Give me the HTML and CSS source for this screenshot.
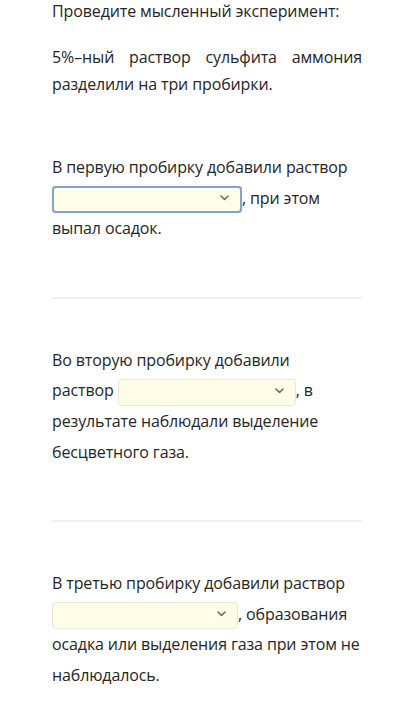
FILE: index.html
```html
<!DOCTYPE html>
<html lang="ru">
<head>
<meta charset="utf-8">
<link rel="stylesheet" href="styles.css">
</head>
<body>
<main class="page">
  <div class="intro">
    <p class="lead">Проведите мысленный эксперимент:</p>
    <p class="just">5%–ный раствор сульфита аммония разделили на три пробирки.</p>
  </div>

  <section class="task task-first">
    <p>В первую пробирку добавили раствор <span class="select focused"><span class="chev"><svg width="9" height="6" viewBox="0 0 9 6"><path d="M1 1l3.5 3.5L8 1" fill="none" stroke="#6b6b6b" stroke-width="1.6" stroke-linecap="round" stroke-linejoin="round"/></svg></span></span>, при этом выпал осадок.</p>
  </section>
  <hr class="divider">

  <section class="task">
    <p>Во вторую пробирку добавили <span class="nowrap">раствор <span class="select narrow"><span class="chev"><svg width="9" height="6" viewBox="0 0 9 6"><path d="M1 1l3.5 3.5L8 1" fill="none" stroke="#6b6b6b" stroke-width="1.6" stroke-linecap="round" stroke-linejoin="round"/></svg></span></span>, в</span> результате наблюдали выделение бесцветного газа.</p>
  </section>
  <hr class="divider">

  <section class="task">
    <p>В третью пробирку добавили раствор <span class="select"><span class="chev"><svg width="9" height="6" viewBox="0 0 9 6"><path d="M1 1l3.5 3.5L8 1" fill="none" stroke="#6b6b6b" stroke-width="1.6" stroke-linecap="round" stroke-linejoin="round"/></svg></span></span>, образования осадка или выделения газа при этом не наблюдалось.</p>
  </section>
</main>
</body>
</html>
```

FILE: styles.css
```css
html, body {
  margin: 0;
  padding: 0;
  background: #ffffff;
}
body {
  font-family: "Open Sans", "Noto Sans", sans-serif;
  font-size: 16px;
  letter-spacing: -0.12px;
  color: #262626;
}
.page {
  width: 310px;
  padding: 0 0 0 52px;
}
p {
  margin: 0;
}
.intro {
  line-height: 27px;
}
.lead {
  margin-top: -2px;
  margin-bottom: 19px;
}
.just {
  text-align: justify;
}
.task {
  line-height: 30.6px;
}
.task-first {
  margin-top: 54px;
}
.nowrap {
  white-space: nowrap;
}
.divider {
  border: 0;
  height: 2px;
  background: #f1f1f1;
  margin: 53px 0 46px;
}
.select {
  display: inline-block;
  vertical-align: middle;
  box-sizing: border-box;
  width: 186px;
  height: 27px;
  background: #fffde8;
  border: 1px solid #ebe8d2;
  border-radius: 4px;
  position: relative;
  line-height: 0;
}
.select.narrow {
  width: 178px;
}
.select.focused {
  width: 190px;
  border: 2px solid #87a2c9;
  box-shadow: 0 0 1px #9fb6d8;
}
.chev {
  position: absolute;
  right: 11px;
  top: 50%;
  margin-top: -4px;
  line-height: 0;
}
```
